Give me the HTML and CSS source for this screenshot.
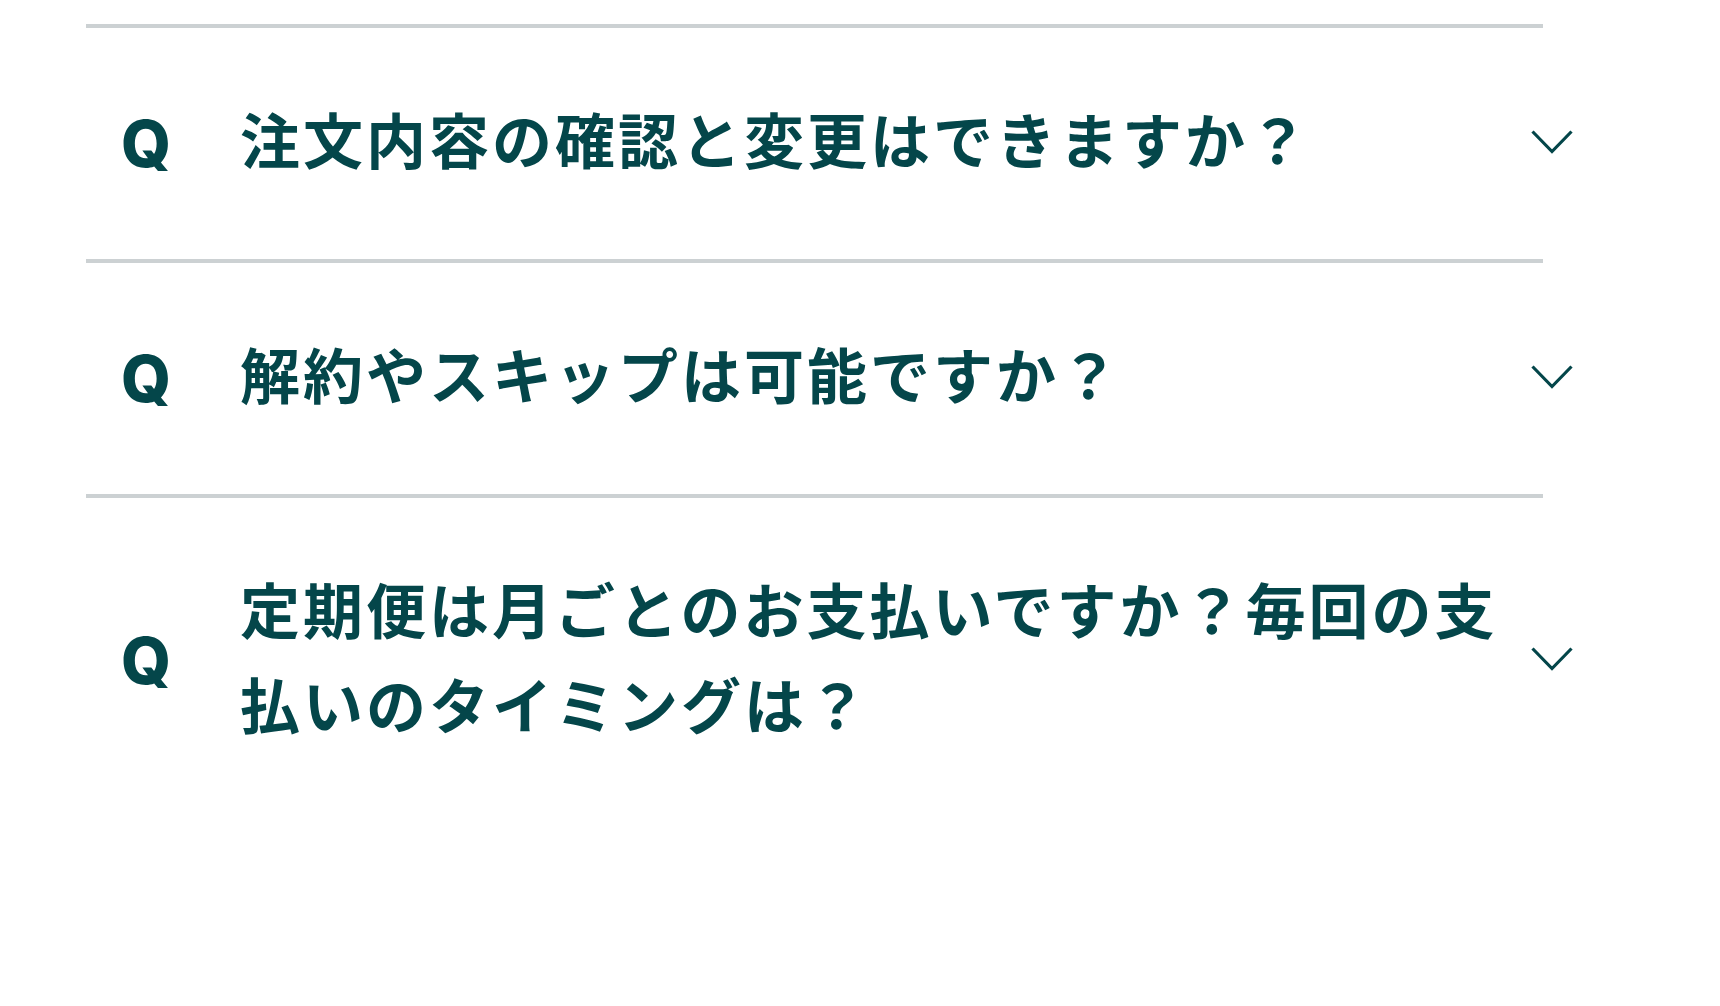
FILE: index.html
```html
<!DOCTYPE html>
<html lang="ja">
<head>
    <meta charset="UTF-8">
    <meta name="viewport" content="width=device-width, initial-scale=1.0">
    <title>よくある質問</title>
    <link rel="stylesheet" href="styles.css">
</head>
<body>

    <div class="faq">
        <div class="faq-item">
            <span class="faq-q">Q</span>
            <p class="faq-text">注文内容の確認と変更はできますか？</p>
            <svg class="faq-arrow" viewBox="0 0 42 24" aria-hidden="true">
                <polyline points="1.5,1.5 21,21.5 40.5,1.5" />
            </svg>
        </div>
        <div class="faq-item">
            <span class="faq-q">Q</span>
            <p class="faq-text">解約やスキップは可能ですか？</p>
            <svg class="faq-arrow" viewBox="0 0 42 24" aria-hidden="true">
                <polyline points="1.5,1.5 21,21.5 40.5,1.5" />
            </svg>
        </div>
        <div class="faq-item last">
            <span class="faq-q">Q</span>
            <p class="faq-text">定期便は月ごとのお支払いですか？毎回の支払いのタイミングは？</p>
            <svg class="faq-arrow" viewBox="0 0 42 24" aria-hidden="true">
                <polyline points="1.5,1.5 21,21.5 40.5,1.5" />
            </svg>
        </div>
    </div>

</body>
</html>
```
FILE: styles.css
```css
body {
    margin: 0;
    background: #fff;
    color: #04464a;
    font-family: "Noto Sans CJK JP", "Noto Sans", sans-serif;
}

/* FAQ list */
.faq {
    width: 1457px;
    margin: 24px 0 0 86px;
}

.faq-item {
    display: flex;
    align-items: center;
    border-top: 4px solid #ccd1d3;
    padding: 62px 0 62px 35px;
}

.faq-item.last {
    padding-bottom: 120px;
}

.faq-q {
    flex: 0 0 119px;
    font-family: Inter, "Liberation Sans", sans-serif;
    font-weight: 800;
    font-size: 64px;
    line-height: 1;
}

/* the CJK glyphs sit low in the line box, pad below to centre them */
.faq-text {
    flex: 1;
    margin: 0;
    padding-bottom: 12px;
    font-size: 60px;
    font-weight: 700;
    line-height: 95px;
    letter-spacing: 0.05em;
}

/* chevron sits a little past the divider's right end */
.faq-arrow {
    flex: 0 0 42px;
    height: 24px;
    margin: 0 -30px 4px 18px;
    fill: none;
    stroke: #04464a;
    stroke-width: 3.2;
}
```
